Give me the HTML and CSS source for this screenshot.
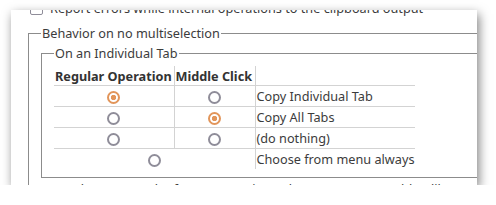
FILE: index.html
```html
<!DOCTYPE html>
<html lang="en">
<head>
    <meta charset="UTF-8">
    <title>Copy Tab Options</title>
    <link rel="stylesheet" href="styles.css">
</head>
<body>
    <div class="panel">
        <label class="report">
            <span class="checkbox"></span>
            <span>Report errors while internal operations to the clipboard output</span>
        </label>

        <fieldset class="outer">
            <legend>Behavior on no multiselection</legend>

            <fieldset class="inner">
                <legend>On an Individual Tab</legend>
                <table class="modes">
                    <colgroup>
                        <col class="col-regular">
                        <col class="col-middle">
                        <col class="col-label">
                    </colgroup>
                    <tr class="head">
                        <th class="sep">Regular Operation</th>
                        <th class="sep">Middle Click</th>
                        <th></th>
                    </tr>
                    <tr>
                        <td class="sep"><span class="radio checked"></span></td>
                        <td class="sep"><span class="radio"></span></td>
                        <td class="label">Copy Individual Tab</td>
                    </tr>
                    <tr>
                        <td class="sep"><span class="radio"></span></td>
                        <td class="sep"><span class="radio checked"></span></td>
                        <td class="label">Copy All Tabs</td>
                    </tr>
                    <tr>
                        <td class="sep"><span class="radio"></span></td>
                        <td class="sep"><span class="radio"></span></td>
                        <td class="label">(do nothing)</td>
                    </tr>
                    <tr class="last">
                        <td class="sep" colspan="2"><span class="radio"></span></td>
                        <td class="label">Choose from menu always</td>
                    </tr>
                </table>
            </fieldset>

            <fieldset class="inner">
                <legend>On the Parent Tab of a Tree (requires tabs management addon like Tree Style Tab)</legend>
            </fieldset>
        </fieldset>
    </div>
</body>
</html>
```

FILE: styles.css
```css
body {
    margin: 0;
    background: #fff;
    font-family: "Noto Sans", "Open Sans", sans-serif;
    font-size: 12.7px;
    color: #3c3c3c;
}
.panel {
    width: 466px;
    height: 175px;
    margin: 10px 0 0 11px;
    overflow: hidden;
    background: #fff;
    box-shadow: 2px 4px 10px rgba(0, 0, 0, 0.5);
}
.report {
    display: flex;
    align-items: center;
    gap: 7px;
    height: 16px;
    margin: -10px 0 0 19px;
    white-space: nowrap;
}
.checkbox {
    width: 11px;
    height: 11px;
    border: 1px solid #8f8d99;
    border-radius: 2px;
    flex: none;
}
fieldset {
    margin: 0;
    border: 1px solid #8c8c8c;
}
legend {
    padding: 0 1px;
    line-height: 18px;
    white-space: nowrap;
}
.outer {
    width: 500px;
    margin: 8px 0 0 17px;
    padding: 0 0 0 12px;
}
.inner {
    margin-top: 2px;
    padding: 0 0 8px 12px;
}
.modes {
    margin-top: 4px;
    border-collapse: collapse;
    table-layout: fixed;
    width: 361px;
}
.col-regular { width: 120px; }
.col-middle { width: 81px; }
.col-label { width: 160px; }
.modes th,
.modes td {
    padding: 0 1px;
    border-bottom: 1px solid #d3d3d3;
    white-space: nowrap;
    text-align: center;
}
.modes th {
    height: 19px;
    font-weight: bold;
    text-align: left;
    color: #333;
}
.modes td {
    height: 20px;
}
.modes .sep {
    border-right: 1px solid #d3d3d3;
}
.modes .label {
    text-align: left;
}
.modes .last td {
    border-bottom: none;
}
.radio {
    display: inline-block;
    vertical-align: middle;
    width: 9px;
    height: 9px;
    border: 2px solid #8f8d99;
    border-radius: 50%;
}
.radio.checked {
    border-color: #e2955a;
    background: radial-gradient(circle, #e2955a 2.4px, transparent 3px);
}
```
